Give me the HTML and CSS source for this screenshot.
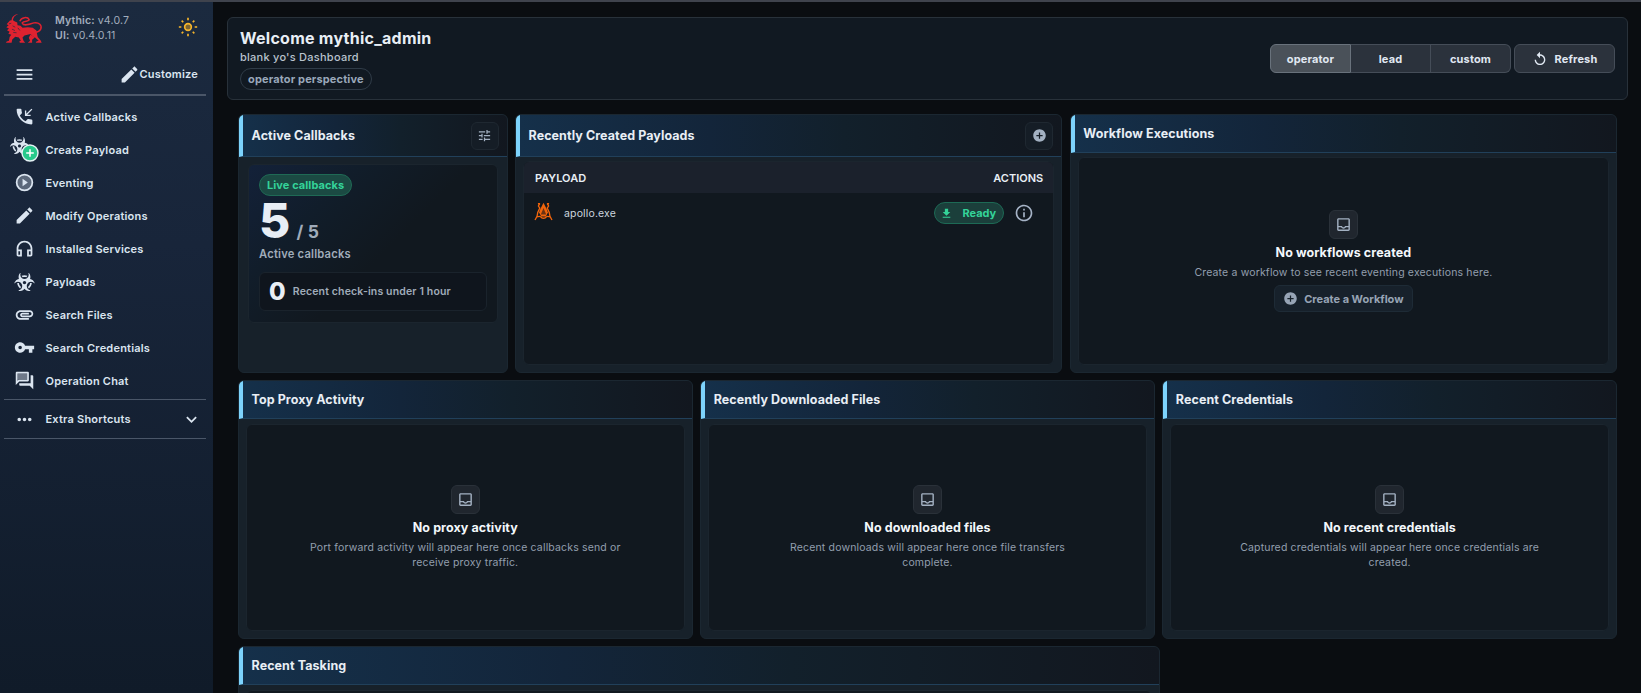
FILE: index.html
```html
<!DOCTYPE html>
<html lang="en">
<head>
  <meta charset="UTF-8">
  <title>Mythic</title>
  <link rel="stylesheet" href="styles.css">
</head>
<body>

  <svg class="sprite" aria-hidden="true">
    <symbol id="biohazard" viewBox="0 0 576 512"><path d="M287.9 112c18.6 0 36.2 3.8 52.8 9.6 13.3-10.3 23.6-24.3 29.5-40.7-25.2-10.9-53-17-82.2-17-29.1 0-56.9 6-82.1 16.9 5.9 16.4 16.2 30.4 29.5 40.7 16.5-5.7 34-9.5 52.5-9.5zM163.6 438.7c12-11.8 20.4-26.4 24.5-42.4-32.9-26.4-54.8-65.3-58.9-109.6-8.5-2.8-17.2-4.6-26.4-4.6-7.6 0-15.2 1-22.5 3.1 4.1 62.8 35.8 118 83.3 153.5zm224.2-42.6c4.1 16 12.5 30.7 24.5 42.5 47.4-35.5 79.1-90.7 83-153.5-7.2-2-14.7-3-22.2-3-9.2 0-18 1.9-26.6 4.7-4.1 44.2-26 82.9-58.7 109.3zm113.5-205c-17.6-10.4-36.3-16.6-55.3-19.9 6-17.7 10-36.4 10-56.2 0-41-14.5-80.8-41-112.2-2.5-3-6.6-3.7-10-1.8-3.3 1.9-4.8 6-3.6 9.7 4.5 13.8 6.6 26.3 6.6 38.5 0 67.8-53.8 122.9-120 122.9S168 117 168 49.2c0-12.1 2.2-24.7 6.6-38.5 1.2-3.7-.3-7.8-3.6-9.7-3.4-1.9-7.5-1.2-10 1.8C134.6 34.2 120 74 120 115c0 19.8 3.9 38.5 10 56.2-18.9 3.3-37.7 9.5-55.3 19.9-34.6 20.5-61 53.3-74.3 92.4-1.3 3.7.2 7.7 3.5 9.8 3.3 2 7.5 1.3 10-1.6 9.4-10.8 19-19.1 29.2-25.1 57.3-33.9 130.8-13.7 163.9 45 33.1 58.7 13.4 134-43.9 167.9-10.2 6.1-22 10.4-35.8 13.4-3.7.8-6.4 4.2-6.4 8.1.1 4 2.7 7.3 6.5 8 39.7 7.8 80.6.8 115.2-19.7 18-10.6 32.9-24.5 45.3-40.1 12.4 15.6 27.3 29.5 45.3 40.1 34.6 20.5 75.5 27.5 115.2 19.7 3.8-.7 6.4-4 6.5-8 0-3.9-2.6-7.3-6.4-8.1-13.9-2.9-25.6-7.3-35.8-13.4-57.3-33.9-77-109.2-43.9-167.9s106.6-78.9 163.9-45c10.2 6.1 19.8 14.3 29.2 25.1 2.5 2.9 6.7 3.6 10 1.6s4.8-6.1 3.5-9.8c-13.1-39.1-39.5-72-74.1-92.4zm-213.4 129c-26.5 0-48-21.5-48-48s21.5-48 48-48 48 21.5 48 48-21.5 48-48 48z"/></symbol>
    <symbol id="edit" viewBox="0 0 24 24"><path d="M3 17.25V21h3.75L17.81 9.94l-3.75-3.75L3 17.25zM20.71 7.04c.39-.39.39-1.02 0-1.41l-2.34-2.34c-.39-.39-1.02-.39-1.41 0l-1.83 1.83 3.75 3.75 1.83-1.83z"/></symbol>
    <symbol id="inbox" viewBox="0 0 24 24"><path d="M19 3H5c-1.1 0-2 .9-2 2v14c0 1.1.9 2 2 2h14c1.1 0 2-.9 2-2V5c0-1.1-.9-2-2-2zm0 16H5v-3h3.56c.69 1.19 1.97 2 3.45 2s2.75-.81 3.45-2H19v3zm0-5h-4.99c0 1.1-.9 2-2 2s-2-.9-2-2H5V5h14v9z"/></symbol>
    <symbol id="add-circle" viewBox="0 0 24 24"><path d="M12 2C6.48 2 2 6.48 2 12s4.48 10 10 10 10-4.48 10-10S17.52 2 12 2zm5 11h-4v4h-2v-4H7v-2h4V7h2v4h4v2z"/></symbol>
  </svg>

  <div class="topline"></div>

  <div class="app">
    <nav class="sidebar">
      <div class="brand">
        <svg class="lion" viewBox="15 40 115 92">
          <path d="M56 42C46 45 40 51 39 61L45 65 52 68 53 76 62 78 68 84 84 82 99 84 110 92 112 103 114 112 123 122 126 129H108L110 125 117 123 107 114 99 110 92 103 74 107 68 113 71 123 76 129H60L58 125 63 123 57 113 46 111 37 119 35 129H18L20 125 27 123 29 112 34 105 25 102 29 96 21 91 27 86 19 82 26 76 20 73 30 62 35 61C35 50 44 43 56 42Z"/>
          <path d="M92 104L87 114 91 123 84 129H97L97 120 105 113Z"/>
          <path class="fur" d="M27 72L34 70M38 78L46 82M36 88L45 92M40 98L50 99M54 84L60 92"/>
          <path class="tail" d="M60 64C64 51 84 50 88 59 88 67 72 61 67 69 71 80 88 74 102 69 118 66 128 77 123 88 119 96 112 97 106 97"/>
        </svg>
        <div class="versions">
          <div><b>Mythic:</b> <span>v4.0.7</span></div>
          <div><b>UI:</b> <span>v0.4.0.11</span></div>
        </div>
        <svg class="sun" viewBox="0 0 24 24"><circle cx="12" cy="12" r="4" fill="#7c6431" stroke="#f6b52b" stroke-width="2"/><path d="M12 1v3M12 20v3M1 12h3M20 12h3M4.4 4.4l1.9 1.9M17.7 17.7l1.9 1.9M4.4 19.6l1.9-1.9M17.7 6.3l1.9-1.9" stroke="#f6b52b" stroke-width="2"/></svg>
      </div>
      <div class="tools">
        <svg class="icon" viewBox="0 0 24 24"><path d="M3 18h18v-2H3v2zm0-5h18v-2H3v2zm0-7v2h18V6H3z"/></svg>
        <div class="customize"><svg class="icon"><use href="#edit"/></svg><span>Customize</span></div>
      </div>
      <ul class="menu">
        <li><svg class="icon" viewBox="0 0 24 24"><path d="M20 15.5c-1.25 0-2.45-.2-3.57-.57-.35-.11-.74-.03-1.02.24l-2.2 2.2c-2.83-1.44-5.15-3.75-6.59-6.59l2.2-2.21c.28-.26.36-.65.25-1C8.7 6.45 8.5 5.25 8.5 4c0-.55-.45-1-1-1H4c-.55 0-1 .45-1 1 0 9.39 7.61 17 17 17 .55 0 1-.45 1-1v-3.5c0-.55-.45-1-1-1zM12.5 5v6.500H19V10h-3.900L21 4.100 19.900 3 14 8.900V5z"/></svg><span>Active Callbacks</span></li>
        <li>
          <div class="stacked">
            <svg class="icon"><use href="#biohazard"/></svg>
            <svg class="badge" viewBox="0 0 18 18"><circle cx="9" cy="9" r="8" fill="#27c98b" stroke="#e6f2f5" stroke-width="1.4"/><path d="M9 5.2v7.6M5.2 9h7.6" stroke="#fff" stroke-width="1.5"/></svg>
          </div>
          <span>Create Payload</span>
        </li>
        <li><svg class="icon" viewBox="0 0 24 24"><circle cx="12" cy="12" r="9" fill-opacity=".35" stroke="currentColor" stroke-width="2"/><path d="M9.8 7.8v8.4l6-4.2z"/></svg><span>Eventing</span></li>
        <li><svg class="icon"><use href="#edit"/></svg><span>Modify Operations</span></li>
        <li><svg class="icon" viewBox="0 0 24 24"><path d="M12 3c-4.97 0-9 4.03-9 9v7c0 1.1.9 2 2 2h4v-8H5v-1c0-3.87 3.13-7 7-7s7 3.13 7 7v1h-4v8h4c1.1 0 2-.9 2-2v-7c0-4.97-4.03-9-9-9M7 15v4H5v-4zm12 4h-2v-4h2z"/></svg><span>Installed Services</span></li>
        <li><svg class="icon bio"><use href="#biohazard"/></svg><span>Payloads</span></li>
        <li><svg class="icon" viewBox="0 0 24 24"><path d="M2 12.5C2 9.46 4.46 7 7.5 7H18c2.21 0 4 1.79 4 4s-1.79 4-4 4H9.5C8.12 15 7 13.88 7 12.5S8.12 10 9.5 10H17v2H9.41c-.55 0-.55 1 0 1H18c1.1 0 2-.9 2-2s-.9-2-2-2H7.5C5.57 9 4 10.57 4 12.5S5.57 16 7.5 16H17v2H7.5C4.46 18 2 15.54 2 12.5z"/></svg><span>Search Files</span></li>
        <li><svg class="icon" viewBox="0 0 24 24"><path d="M12.65 10C11.83 7.67 9.61 6 7 6c-3.31 0-6 2.69-6 6s2.69 6 6 6c2.61 0 4.83-1.67 5.65-4H17v4h4v-4h2v-4H12.65zM7 14c-1.1 0-2-.9-2-2s.9-2 2-2 2 .9 2 2-.9 2-2 2z"/></svg><span>Search Credentials</span></li>
        <li><svg class="icon" viewBox="0 0 24 24"><path fill-opacity=".45" d="M15 4v7H4V4z"/><path fill-rule="evenodd" d="M16 13c.55 0 1-.45 1-1V3c0-.55-.45-1-1-1H3c-.55 0-1 .45-1 1v14l4-4h10zM4 12.17V4h11v7H5.17L4 12.17zM22 7c0-.55-.45-1-1-1h-2v9H6v2c0 .55.45 1 1 1h11l4 4V7z"/></svg><span>Operation Chat</span></li>
      </ul>
      <div class="extra">
        <svg class="icon" viewBox="0 0 24 24"><path d="M6 10c-1.1 0-2 .9-2 2s.9 2 2 2 2-.9 2-2-.9-2-2-2zm12 0c-1.1 0-2 .9-2 2s.9 2 2 2 2-.9 2-2-.9-2-2-2zm-6 0c-1.1 0-2 .9-2 2s.9 2 2 2 2-.9 2-2-.9-2-2-2z"/></svg>
        <span>Extra Shortcuts</span>
        <svg class="icon arrow" viewBox="0 0 24 24"><path d="M16.59 8.59L12 13.17 7.41 8.59 6 10l6 6 6-6z"/></svg>
      </div>
    </nav>

    <main class="content">
      <header class="welcome">
        <div class="welcome-text">
          <h1>Welcome mythic_admin</h1>
          <p>blank yo's Dashboard</p>
          <span class="chip">operator perspective</span>
        </div>
        <div class="actions">
          <div class="toggle">
            <button class="selected">operator</button>
            <button>lead</button>
            <button>custom</button>
          </div>
          <button class="refresh"><svg viewBox="0 0 24 24"><path d="M12 5V1L7 6l5 5V7c3.31 0 6 2.69 6 6s-2.69 6-6 6-6-2.69-6-6H4c0 4.42 3.58 8 8 8s8-3.58 8-8-3.58-8-8-8z"/></svg><span>Refresh</span></button>
        </div>
      </header>

      <div class="dashboard">
        <div class="row row-top">
          <section class="card">
            <div class="card-head tall">
              <h2>Active Callbacks</h2>
              <button class="icon-btn"><svg viewBox="0 0 24 24"><path d="M3 17v2h6v-2H3zM3 5v2h10V5H3zm10 16v-2h8v-2h-8v-2h-2v6h2zM7 9v2H3v2h4v2h2V9H7zm14 4v-2H11v2h10zm-6-4h2V7h4V5h-4V3h-2v6z"/></svg></button>
            </div>
            <div class="callbacks">
              <span class="chip live">Live callbacks</span>
              <div class="count"><strong>5</strong><span>/ 5</span></div>
              <div class="count-label">Active callbacks</div>
              <div class="recent"><strong>0</strong><span>Recent check-ins under 1 hour</span></div>
            </div>
          </section>

          <section class="card">
            <div class="card-head tall">
              <h2>Recently Created Payloads</h2>
              <button class="icon-btn"><svg><use href="#add-circle"/></svg></button>
            </div>
            <div class="panel table">
              <div class="table-head"><span>PAYLOAD</span><span>ACTIONS</span></div>
              <div class="table-row">
                <svg class="apollo" viewBox="0 0 54 56"><path d="M27 2L17 22 14 31 20 43H34L40 31 37 22Z" fill="#f0640c"/><path d="M27 18L19 37H35Z" fill="#6b3313"/><path d="M10 3h7v5h-5zM44 3h-7v5h5z" fill="#f0640c"/><path d="M15 6L12 12 16 18 10 31 8 42 2 53M39 6L42 12 38 18 44 31 46 42 52 53M7 44Q18 40 21 46 27 50 33 46 36 40 47 44" fill="none" stroke="#f0640c" stroke-width="4"/></svg>
                <span class="file">apollo.exe</span>
                <span class="chip ready"><svg viewBox="0 0 24 24"><path d="M19 9h-4V3H9v6H5l7 7 7-7zM5 18v2h14v-2H5z"/></svg><span>Ready</span></span>
                <svg class="info" viewBox="0 0 24 24"><path d="M11 7h2v2h-2zm0 4h2v6h-2zm1-9C6.48 2 2 6.48 2 12s4.48 10 10 10 10-4.48 10-10S17.52 2 12 2zm0 18c-4.41 0-8-3.59-8-8s3.59-8 8-8 8 3.59 8 8-3.59 8-8 8z"/></svg>
              </div>
            </div>
          </section>

          <section class="card">
            <div class="card-head"><h2>Workflow Executions</h2></div>
            <div class="panel empty">
              <div class="empty-icon"><svg><use href="#inbox"/></svg></div>
              <h3>No workflows created</h3>
              <p>Create a workflow to see recent eventing executions here.</p>
              <button class="create"><svg><use href="#add-circle"/></svg><span>Create a Workflow</span></button>
            </div>
          </section>
        </div>

        <div class="row row-mid">
          <section class="card">
            <div class="card-head"><h2>Top Proxy Activity</h2></div>
            <div class="panel empty">
              <div class="empty-icon"><svg><use href="#inbox"/></svg></div>
              <h3>No proxy activity</h3>
              <p>Port forward activity will appear here once callbacks send or receive proxy traffic.</p>
            </div>
          </section>
          <section class="card">
            <div class="card-head"><h2>Recently Downloaded Files</h2></div>
            <div class="panel empty">
              <div class="empty-icon"><svg><use href="#inbox"/></svg></div>
              <h3>No downloaded files</h3>
              <p>Recent downloads will appear here once file transfers complete.</p>
            </div>
          </section>
          <section class="card">
            <div class="card-head"><h2>Recent Credentials</h2></div>
            <div class="panel empty">
              <div class="empty-icon"><svg><use href="#inbox"/></svg></div>
              <h3>No recent credentials</h3>
              <p>Captured credentials will appear here once credentials are created.</p>
            </div>
          </section>
        </div>

        <div class="row row-bottom">
          <section class="card">
            <div class="card-head"><h2>Recent Tasking</h2></div>
            <div class="panel"></div>
          </section>
        </div>
      </div>
    </main>
  </div>

</body>
</html>
```

FILE: styles.css
```css
* {
  box-sizing: border-box;
}

body {
  margin: 0;
  height: 693px;
  overflow: hidden;
  background: #0a0d11;
  color: #e8eef5;
  font-family: Inter, sans-serif;
  font-size: 11px;
  letter-spacing: 0.15px;
}

h1, h2, h3, p, ul {
  margin: 0;
  padding: 0;
}

button {
  font-family: inherit;
  letter-spacing: inherit;
  color: inherit;
  padding: 0;
}

svg {
  fill: currentColor;
  flex: none;
}

.sprite {
  display: none;
}

.topline {
  height: 2px;
  background: #3f434d;
}

.app {
  display: flex;
  height: 691px;
  overflow: hidden;
}

/* sidebar */

.sidebar {
  width: 213px;
  flex: none;
  padding: 0 7px 0 4px;
  background: linear-gradient(180deg, #1b2a3f 0%, #18253a 35%, #101b29 100%);
  color: #dbe5f0;
  font-weight: 600;
  letter-spacing: 0.2px;
}

.brand {
  display: flex;
  height: 50px;
  padding-top: 11px;
}

.lion {
  width: 38px;
  height: 31px;
  margin-left: 1px;
  fill: #df2230;
}

.fur {
  stroke: #1b2a3f;
  stroke-width: 2;
}

.tail {
  fill: none;
  stroke: #df2230;
  stroke-width: 4.5;
}

.versions {
  margin: 1px 0 0 12px;
  font-size: 10.6px;
  line-height: 14.5px;
  color: #a2adbd;
  font-weight: 400;
  letter-spacing: 0.12px;
}

.versions b {
  font-weight: 600;
}

.sun {
  width: 20px;
  height: 20px;
  margin: 4px 8px 0 auto;
}

.tools {
  display: flex;
  align-items: center;
  justify-content: space-between;
  height: 44px;
  padding: 2px 8px 0 9.5px;
  border-bottom: 2px solid #4a5668;
}

.customize {
  display: flex;
  align-items: center;
}

.icon {
  width: 21px;
  height: 21px;
}

.menu {
  list-style: none;
  padding: 4px 0 2px;
}

.menu li,
.extra {
  display: flex;
  align-items: center;
  height: 33px;
  padding-left: 9.5px;
  gap: 11px;
}

.stacked {
  position: relative;
  width: 21px;
  height: 21px;
}

.stacked .icon {
  position: absolute;
  left: -4px;
  top: -2px;
  width: 19px;
  height: 17px;
}

.stacked .badge {
  position: absolute;
  left: 7px;
  top: 5px;
  width: 18px;
  height: 18px;
}

.bio {
  height: 18px;
}

.extra {
  height: 40px;
  border-top: 1px solid #4a5668;
  border-bottom: 1px solid #4a5668;
}

.arrow {
  margin: 0 4px 0 auto;
}

/* welcome bar */

.content {
  flex: 1;
  min-width: 0;
  padding: 15px 13px 0 14px;
}

.welcome {
  display: flex;
  align-items: center;
  justify-content: space-between;
  height: 83px;
  padding: 0 12px;
  background: #111922;
  border: 1px solid #28313a;
  border-radius: 6px;
}

.welcome h1 {
  font-size: 16px;
  line-height: 21px;
  font-weight: 700;
  letter-spacing: 0.25px;
}

.welcome p {
  line-height: 16px;
  margin-bottom: 3px;
  font-weight: 500;
  color: #b9c2ce;
  letter-spacing: 0.25px;
}

.chip {
  display: inline-flex;
  align-items: center;
  height: 22px;
  padding: 0 7px;
  border: 1px solid #2f3b47;
  border-radius: 11px;
  color: #9aa8ba;
  font-weight: 700;
}

.actions {
  display: flex;
  gap: 3px;
}

.toggle {
  display: flex;
}

.toggle button,
.refresh {
  width: 81px;
  height: 29px;
  background: #2b323c;
  border: 1px solid #454d58;
  color: #e0e8f2;
  font-size: 11px;
  font-weight: 700;
}

.toggle button + button {
  border-left: 0;
  width: 80px;
}

.toggle button:first-child {
  border-radius: 6px 0 0 6px;
}

.toggle button:last-child {
  border-radius: 0 6px 6px 0;
}

.toggle .selected {
  background: #4a5159;
  border-color: #69727c;
}

.refresh {
  display: flex;
  align-items: center;
  justify-content: center;
  gap: 7px;
  width: 101px;
  border-radius: 6px;
}

.refresh svg {
  width: 16px;
  height: 16px;
}

/* dashboard */

.dashboard {
  display: flex;
  flex-direction: column;
  gap: 7px;
  padding: 14px 11px 0;
}

.row {
  display: grid;
  gap: 7.5px;
  height: 259px;
}

.row-top {
  grid-template-columns: 269.5px 1fr 1fr;
}

.row-mid {
  grid-template-columns: repeat(3, 1fr);
}

.row-bottom {
  grid-template-columns: 922px;
}

.card {
  display: flex;
  flex-direction: column;
  overflow: hidden;
  background: #17212a;
  border: 1px solid #1b2731;
  border-radius: 6px;
}

.card-head {
  display: flex;
  align-items: center;
  justify-content: space-between;
  height: 38px;
  flex: none;
  padding: 0 8px 0 8.5px;
  border-left: 4px solid #7dd3fc;
  border-bottom: 1px solid #21405a;
  background: linear-gradient(90deg, #15304a 0%, #13253a 35%, #12202b 60%, #12171f 100%);
}

.card-head.tall {
  height: 42px;
}

.card-head h2 {
  font-size: 12.5px;
  font-weight: 700;
  letter-spacing: 0.08px;
}

.icon-btn {
  display: flex;
  align-items: center;
  justify-content: center;
  width: 28px;
  height: 28px;
  background: #151d26;
  border: 1px solid #1f2831;
  border-radius: 6px;
  color: #a3b1c2;
}

.icon-btn svg {
  width: 15px;
  height: 15px;
}

.panel {
  flex: 1;
  margin: 5px 7px 7px;
  background: #11181f;
  border: 1px solid #1b252e;
  border-radius: 6px;
  overflow: hidden;
}

.row-top .panel {
  margin-top: 4px;
}

.callbacks {
  display: flex;
  flex-direction: column;
  align-items: flex-start;
  margin: 7px 9px;
  height: 159px;
  padding: 9px 10px;
  background: linear-gradient(135deg, #132139 0%, #111d2a 28%, #11181f 55%);
  border: 1px solid #1b252e;
  border-radius: 6px;
}

.chip.live {
  background: #1b4a43;
  border-color: #1f6a55;
  color: #34d399;
  letter-spacing: 0.08px;
}

.count {
  display: flex;
  align-items: baseline;
  height: 50px;
  gap: 6px;
}

.count strong {
  font-size: 48px;
  line-height: 50px;
  font-weight: 800;
}

.count span {
  font-size: 17.5px;
  font-weight: 700;
  color: #a0acba;
}

.count-label {
  font-size: 11.2px;
  line-height: 16px;
  font-weight: 600;
  letter-spacing: 0.2px;
  color: #a0acba;
}

.recent {
  display: flex;
  align-items: center;
  align-self: stretch;
  gap: 7px;
  height: 39px;
  margin-top: 10px;
  padding: 0 9px;
  background: #0f151d;
  border: 1px solid #1a232c;
  border-radius: 6px;
}

.recent strong {
  font-size: 24px;
  font-weight: 800;
}

.recent span {
  font-size: 10.5px;
  font-weight: 600;
  color: #a0acba;
}

.table-head {
  display: flex;
  align-items: center;
  justify-content: space-between;
  height: 31px;
  padding: 0 10px 0 11px;
  background: #1b212c;
  font-weight: 600;
  letter-spacing: 0;
}

.table-row {
  display: flex;
  align-items: center;
  height: 40px;
  padding: 0 19px 0 10px;
}

.apollo {
  width: 19px;
  height: 19px;
  margin-top: -4px;
}

.file {
  margin: 0 auto 0 11px;
  font-size: 10.5px;
  color: #ccd5df;
}

.chip.ready {
  width: 70px;
  padding: 0 7px 0 5px;
  justify-content: space-between;
  background: #1b3f3b;
  border-color: #1d6a55;
  color: #34d399;
  letter-spacing: 0;
}

.ready svg {
  width: 13px;
  height: 13px;
}

.info {
  width: 20px;
  height: 20px;
  margin-left: 10px;
  color: #a6b3c6;
}

.empty {
  display: flex;
  flex-direction: column;
  align-items: center;
  justify-content: center;
  text-align: center;
}

.empty-icon {
  display: flex;
  align-items: center;
  justify-content: center;
  width: 29px;
  height: 29px;
  background: #20262e;
  border: 1px solid #2a3139;
  border-radius: 6px;
  color: #a3b1c2;
}

.empty-icon svg {
  width: 17px;
  height: 17px;
}

.empty h3 {
  margin-top: 5px;
  font-size: 12.5px;
  line-height: 17px;
  font-weight: 700;
  letter-spacing: 0.08px;
  color: #f3f7fb;
}

.empty p {
  max-width: 320px;
  margin-top: 4.5px;
  font-size: 10.5px;
  line-height: 15px;
  color: #939fae;
  letter-spacing: 0.16px;
}

.create {
  display: flex;
  align-items: center;
  justify-content: center;
  gap: 6px;
  width: 139px;
  height: 27px;
  margin-top: 5px;
  background: #17212b;
  border: 1px solid #1e2b36;
  border-radius: 6px;
  color: #97a4b5;
  font-size: 11px;
  font-weight: 700;
  letter-spacing: 0;
}

.create svg {
  width: 15px;
  height: 15px;
}
```
